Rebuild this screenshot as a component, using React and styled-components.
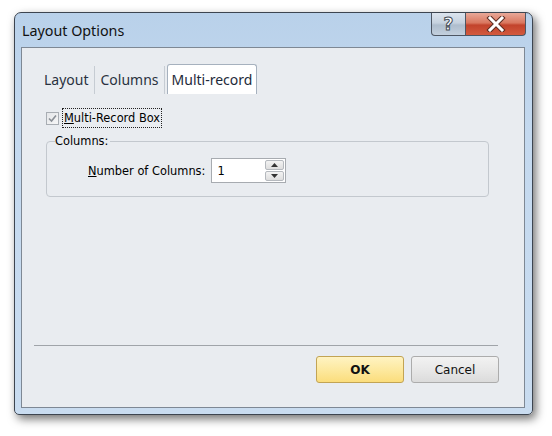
import React from 'react'
import styled, { createGlobalStyle } from 'styled-components'

const GlobalStyle = createGlobalStyle`
  html, body {
    margin: 0;
    padding: 0;
    background: #ffffff;
  }
`

const Page = styled.div`
  padding: 12px 0 0 14px;
  width: 552px;
  height: 436px;
  box-sizing: border-box;
`

const Window = styled.div`
  width: 519px;
  height: 403px;
  box-sizing: border-box;
  border: 1px solid #3d4550;
  border-radius: 7px 7px 5px 5px;
  background: linear-gradient(180deg, #b9d1ea 0%, #c4d9ef 30%, #c9dcf0 100%);
  box-shadow: 3px 4px 10px rgba(0, 0, 0, 0.55);
  display: flex;
  flex-direction: column;
  padding: 0 7px 6px 6px;
`

const TitleBar = styled.div`
  height: 34px;
  display: flex;
  align-items: flex-start;
  justify-content: space-between;
`

const Title = styled.div`
  font-family: 'Noto Sans', 'Open Sans', sans-serif;
  font-size: 14.3px;
  color: #111;
  padding: 8px 0 0 1px;
`

const Caption = styled.div`
  display: flex;
  margin-right: -1px;
`

const CapButton = styled.div`
  width: ${p => p.$w}px;
  height: 23px;
  box-sizing: border-box;
  border: 1px solid #4d5663;
  border-top: none;
  display: flex;
  align-items: center;
  justify-content: center;
  background: ${p => p.$red
    ? 'linear-gradient(180deg, #e8a898 0%, #d9775f 45%, #c2432c 55%, #d35a3e 100%)'
    : 'linear-gradient(180deg, #dce4ee 0%, #c6d2df 45%, #aebdcd 55%, #c3d0de 100%)'};
  border-radius: ${p => p.$red ? '0 0 4px 0' : '0 0 0 4px'};
  border-left: ${p => p.$red ? 'none' : '1px solid #4d5663'};
`

const HelpGlyph = styled.span`
  font-family: 'DejaVu Sans', sans-serif;
  font-weight: bold;
  font-size: 17px;
  line-height: 1;
  color: #fff;
  -webkit-text-stroke: 1px #444b55;
  margin-top: 1px;
`

const Client = styled.div`
  flex: 1;
  background: #e9ecf0;
  border: 1px solid #7e8894;
  display: flex;
  flex-direction: column;
  font-family: 'DejaVu Sans', Tahoma, sans-serif;
  font-size: 11.4px;
  color: #000;
`

const TabBar = styled.div`
  display: flex;
  align-items: stretch;
  height: 30px;
  margin: 16px 0 0 16px;
`

const Tab = styled.div`
  font-family: 'Noto Sans', 'Open Sans', sans-serif;
  font-size: 14px;
  color: ${p => p.$active ? '#1e2a3a' : '#2a3240'};
  padding: 6px 5px 0 6px;
  box-sizing: border-box;
  ${p => p.$active && `
    background: #fff;
    border: 1px solid #a6b1be;
    border-bottom: none;
    border-radius: 3px 3px 0 0;
    margin-left: 2px;
    padding: 5px 4px 0 4px;
  `}
`

const TabSep = styled.div`
  width: 1px;
  margin: 2px 0 0 0;
  background: #c6ccd3;
`

const Panel = styled.div`
  padding: 15px 0 0 24px;
  display: flex;
  flex-direction: column;
`

const CheckRow = styled.label`
  display: flex;
  align-items: center;
  gap: 4px;
  height: 18px;
`

const Box = styled.span`
  width: 13px;
  height: 13px;
  box-sizing: border-box;
  border: 1px solid #a8adb3;
  background: linear-gradient(135deg, #e4e6e9, #f6f6f6);
  display: flex;
  align-items: center;
  justify-content: center;
`

const FocusLabel = styled.span`
  outline: 1px dotted #222;
  padding: 2px 1px;
  line-height: 14px;
`

const U = styled.span`
  text-decoration: underline;
`

const Group = styled.fieldset`
  margin: 7px 0 0 0;
  width: 443px;
  height: 63px;
  box-sizing: border-box;
  border: 1px solid #c3c8ce;
  border-radius: 4px;
  padding: 0 0 0 8px;
`

const Legend = styled.legend`
  padding: 0 2px 0 0;
  margin: 0;
  line-height: 14px;
`

const FieldRow = styled.div`
  display: flex;
  align-items: center;
  gap: 6px;
  margin: 10px 0 0 33px;
`

const Spin = styled.div`
  width: 75px;
  height: 25px;
  box-sizing: border-box;
  border: 1px solid #a7abb0;
  background: #fff;
  display: flex;
  align-items: stretch;
  justify-content: space-between;
  padding: 1px;
`

const SpinValue = styled.span`
  padding: 4px 0 0 4px;
  color: #000;
`

const SpinButtons = styled.div`
  width: 19px;
  display: flex;
  flex-direction: column;
  gap: 1px;
`

const SpinBtn = styled.div`
  flex: 1;
  border: 1px solid #b5b9be;
  border-radius: 2px;
  background: linear-gradient(180deg, #f3f3f3, #dedede);
  display: flex;
  align-items: center;
  justify-content: center;
`

const Spacer = styled.div`
  flex: 1;
`

const Separator = styled.div`
  height: 1px;
  background: #a0a4a9;
  margin: 0 26px 0 12px;
`

const Footer = styled.div`
  display: flex;
  justify-content: flex-end;
  gap: 7px;
  padding: 10px 25px 24px 0;
`

const Button = styled.button`
  width: 88px;
  height: 27px;
  border-radius: 3px;
  font-family: 'DejaVu Sans', Tahoma, sans-serif;
  font-size: 12px;
  font-weight: ${p => p.$primary ? 'bold' : 'normal'};
  color: #111;
  border: 1px solid ${p => p.$primary ? '#c2a454' : '#acacac'};
  background: ${p => p.$primary
    ? 'linear-gradient(180deg, #fff3c2 0%, #fde9a0 50%, #fbdd7c 100%)'
    : 'linear-gradient(180deg, #f2f2f2 0%, #e8e8e8 50%, #dbdbdb 100%)'};
  padding: 0;
`

const Arrow = ({ up }) => (
  <svg width="7" height="4" viewBox="0 0 7 4">
    <path d={up ? 'M0 4 L3.5 0 L7 4 Z' : 'M0 0 L3.5 4 L7 0 Z'} fill="#333" />
  </svg>
)

export default function App() {
  return (
    <Page>
      <GlobalStyle />
      <Window>
        <TitleBar>
          <Title>Layout Options</Title>
          <Caption>
            <CapButton $w={35}>
              <HelpGlyph>?</HelpGlyph>
            </CapButton>
            <CapButton $w={60} $red>
              <svg width="20" height="16" viewBox="0 0 20 16">
                <path d="M4 2 L16 14 M16 2 L4 14" stroke="#5b2c22" strokeWidth="5" strokeLinecap="square" />
                <path d="M4 2 L16 14 M16 2 L4 14" stroke="#fff" strokeWidth="3" strokeLinecap="square" />
              </svg>
            </CapButton>
          </Caption>
        </TitleBar>
        <Client>
          <TabBar>
            <Tab>Layout</Tab>
            <TabSep />
            <Tab>Columns</Tab>
            <TabSep />
            <Tab $active>Multi-record</Tab>
          </TabBar>
          <Panel>
            <CheckRow>
              <Box>
                <svg width="9" height="9" viewBox="0 0 9 9">
                  <path d="M1 4.5 L3.5 7 L8 1.5" stroke="#8a8f96" strokeWidth="1.6" fill="none" />
                </svg>
              </Box>
              <FocusLabel><U>M</U>ulti-Record Box</FocusLabel>
            </CheckRow>
            <Group>
              <Legend>Columns:</Legend>
              <FieldRow>
                <span><U>N</U>umber of Columns:</span>
                <Spin>
                  <SpinValue>1</SpinValue>
                  <SpinButtons>
                    <SpinBtn><Arrow up /></SpinBtn>
                    <SpinBtn><Arrow /></SpinBtn>
                  </SpinButtons>
                </Spin>
              </FieldRow>
            </Group>
          </Panel>
          <Spacer />
          <Separator />
          <Footer>
            <Button $primary>OK</Button>
            <Button>Cancel</Button>
          </Footer>
        </Client>
      </Window>
    </Page>
  )
}
